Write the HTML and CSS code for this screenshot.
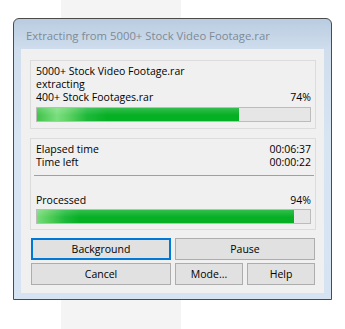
FILE: index.html
```html
<!DOCTYPE html>
<html>
<head>
<meta charset="utf-8">
<link rel="stylesheet" href="styles.css">
</head>
<body>
<div class="window">
  <div class="titlebar"><span class="title">Extracting from 5000+ Stock Video Footage.rar</span></div>
  <div class="client">
    <div class="group g1">
      <div class="line">5000+ Stock Video Footage.rar</div>
      <div class="line">extracting</div>
      <div class="line row"><span>400+ Stock Footages.rar</span><span>74%</span></div>
      <div class="bar bar1"><div class="fill" style="width:74%"></div></div>
    </div>
    <div class="group g2">
      <div class="line row"><span>Elapsed time</span><span>00:06:37</span></div>
      <div class="line row"><span>Time left</span><span>00:00:22</span></div>
      <div class="sep"></div>
      <div class="line row processed"><span>Processed</span><span>94%</span></div>
      <div class="bar bar2"><div class="fill" style="width:94%"></div></div>
    </div>
    <div class="buttons">
      <button class="btn default">Background</button>
      <button class="btn wide">Pause</button>
      <button class="btn">Cancel</button>
      <button class="btn">Mode...</button>
      <button class="btn">Help</button>
    </div>
  </div>
</div>
</body>
</html>
```
FILE: styles.css
```css
html, body {
  margin: 0;
  padding: 0;
}
body {
  width: 345px;
  height: 329px;
  overflow: hidden;
  background: linear-gradient(to right, #ffffff 61px, #f4f4f4 61px, #f4f4f4 181px, #ffffff 181px);
  font-family: "Open Sans", "Noto Sans", sans-serif;
  font-size: 10.5px;
  color: #000;
}
.window {
  margin: 18px 0 0 13px;
  width: 319px;
  box-sizing: border-box;
  border: 1px solid #4b4b4b;
  border-radius: 6px 6px 0 0;
  background: linear-gradient(to bottom, #b9cce0 0px, #cfdded 30px, #d7e4f2 120px, #d6e3f2 100%);
  padding: 0 7px 6px 7px;
}
.titlebar {
  height: 30px;
  display: flex;
  align-items: flex-end;
  padding-left: 5px;
  box-sizing: border-box;
  padding-bottom: 6px;
}
.title {
  font-size: 11.3px;
  color: #7d8a97;
  line-height: 14px;
}
.client {
  height: 244px;
  background: #f0f0f0;
  padding: 11px 8px 0 9px;
  box-sizing: border-box;
}
.group {
  border: 1px solid #dcdcdc;
  padding: 4px 4px 6px 5px;
}
.g2 {
  margin-top: 9px;
  padding-bottom: 5px;
}
.line {
  height: 13px;
  line-height: 13px;
  white-space: nowrap;
}
.row {
  display: flex;
  justify-content: space-between;
}
.bar {
  margin-top: 3px;
  height: 15px;
  box-sizing: border-box;
  border: 1px solid #bcbcbc;
  background: #e6e6e6;
}
.bar2 {
  margin-top: 2px;
}
.fill {
  height: 100%;
}
.bar1 .fill {
  background:
    linear-gradient(to bottom, rgba(255,255,255,0.18), rgba(255,255,255,0) 55%),
    linear-gradient(to right, #3fc34a 0px, #7ade7e 20px, #5bd162 32px, #1db93a 50px, #06b025 70px);
}
.bar2 .fill {
  background:
    linear-gradient(to bottom, rgba(255,255,255,0.18), rgba(255,255,255,0) 55%),
    linear-gradient(to right, #76dc78 0px, #4ccb55 14px, #1db93a 28px, #06b025 42px);
}
.sep {
  height: 1px;
  background: #a0a0a0;
  margin: 6px -3px 0 -2px;
}
.processed {
  margin-top: 18px;
}
.buttons {
  margin: 8px 0 0 1px;
  display: grid;
  grid-template-columns: 140px 68px 68px;
  grid-auto-rows: 22px;
  column-gap: 4px;
  row-gap: 3px;
}
.btn {
  font-family: "Open Sans", "Noto Sans", sans-serif;
  font-size: 10.5px;
  color: #000;
  background: #e1e1e1;
  border: 1px solid #adadad;
  padding: 0;
  margin: 0;
  line-height: 14px;
}
.default {
  border: 2px solid #0078d7;
}
.wide {
  grid-column: span 2;
}
```
